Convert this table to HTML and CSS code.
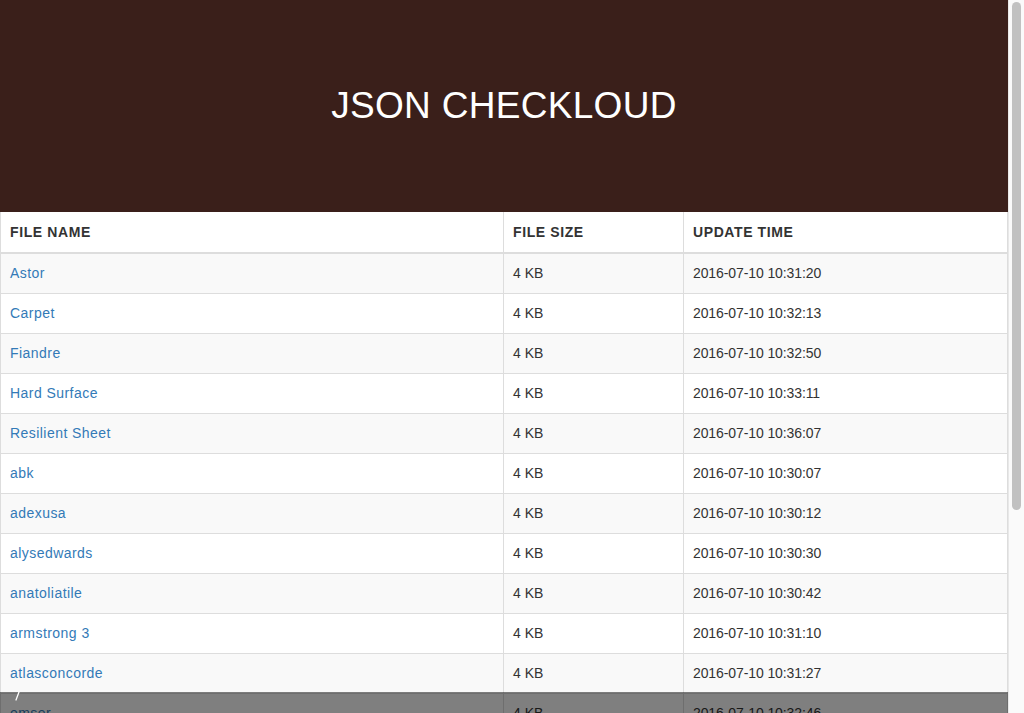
FILE: index.html
```html
<!DOCTYPE html>
<html lang="en">
<head>
<meta charset="utf-8">
<title>JSON CHECKLOUD</title>
<link rel="stylesheet" href="styles.css">
</head>
<body>
<div class="viewport">
  <div class="page">
    <header class="banner">
      <h1 class="banner-title">JSON CHECKLOUD</h1>
    </header>
    <main class="content">
      <table class="files">
        <colgroup>
          <col class="col-name">
          <col class="col-size">
          <col class="col-time">
        </colgroup>
        <thead>
          <tr><th>FILE NAME</th><th>FILE SIZE</th><th>UPDATE TIME</th></tr>
        </thead>
        <tbody>
          <tr><td><a href="#">Astor</a></td><td>4 KB</td><td class="time">2016-07-10 10:31:20</td></tr>
          <tr><td><a href="#">Carpet</a></td><td>4 KB</td><td class="time">2016-07-10 10:32:13</td></tr>
          <tr><td><a href="#">Fiandre</a></td><td>4 KB</td><td class="time">2016-07-10 10:32:50</td></tr>
          <tr><td><a href="#">Hard Surface</a></td><td>4 KB</td><td class="time">2016-07-10 10:33:11</td></tr>
          <tr><td><a href="#">Resilient Sheet</a></td><td>4 KB</td><td class="time">2016-07-10 10:36:07</td></tr>
          <tr><td><a href="#">abk</a></td><td>4 KB</td><td class="time">2016-07-10 10:30:07</td></tr>
          <tr><td><a href="#">adexusa</a></td><td>4 KB</td><td class="time">2016-07-10 10:30:12</td></tr>
          <tr><td><a href="#">alysedwards</a></td><td>4 KB</td><td class="time">2016-07-10 10:30:30</td></tr>
          <tr><td><a href="#">anatoliatile</a></td><td>4 KB</td><td class="time">2016-07-10 10:30:42</td></tr>
          <tr><td><a href="#">armstrong 3</a></td><td>4 KB</td><td class="time">2016-07-10 10:31:10</td></tr>
          <tr><td><a href="#">atlasconcorde</a></td><td>4 KB</td><td class="time">2016-07-10 10:31:27</td></tr>
          <tr class="partial"><td><a href="#">emser</a></td><td>4 KB</td><td class="time">2016-07-10 10:32:46</td></tr>
        </tbody>
      </table>
    </main>
    <div class="backdrop">
      <svg class="backdrop-mark" width="8" height="10" viewBox="0 0 8 10" aria-hidden="true">
        <line x1="2" y1="9" x2="5" y2="1" stroke="#fff" stroke-width="1.3" stroke-linecap="round"/>
      </svg>
    </div>
  </div>
  <div class="scrollbar" aria-hidden="true">
    <div class="scrollbar-thumb"></div>
  </div>
</div>
</body>
</html>
```

FILE: styles.css
```css
html,
body {
  height: 100%;
}

body {
  margin: 0;
  overflow: hidden;
  font-family: "Liberation Sans", Arial, Helvetica, sans-serif;
  font-size: 14px;
  line-height: 20px;
  color: #333;
  background: #fff;
}

.viewport {
  display: flex;
  height: 100vh;
}

.page {
  flex: 1;
  min-width: 0;
  position: relative;
  overflow: hidden;
}

.scrollbar {
  width: 16px;
  flex: none;
  box-sizing: border-box;
  background: #fafafa;
  border-left: 1px solid #e8e8e8;
  padding: 2px 3px 0 3px;
}

.scrollbar-thumb {
  height: 508px;
  background: #c1c1c1;
  border-radius: 5px;
}

.banner {
  height: 212px;
  background: #3a1f1a;
  display: flex;
  align-items: center;
  justify-content: center;
}

.banner-title {
  margin: 0;
  color: #fff;
  font-size: 37px;
  font-weight: normal;
  line-height: 40px;
  letter-spacing: 0.3px;
}

.files {
  width: 100%;
  border-collapse: collapse;
  table-layout: fixed;
  border-left: 1px solid #ddd;
  border-right: 1px solid #ddd;
}

.col-name {
  width: 503px;
}

.col-size {
  width: 180px;
}

.files th,
.files td {
  text-align: left;
  padding: 9px 9px 10px;
  line-height: 20px;
  border: 1px solid #ddd;
  white-space: nowrap;
}

.files thead th {
  font-weight: bold;
  letter-spacing: 0.6px;
  border-top: 0;
  border-bottom: 2px solid #ddd;
  padding-top: 10px;
  padding-bottom: 10px;
}

.files tbody tr:nth-child(odd) {
  background: #f9f9f9;
}

.files a {
  color: #337ab7;
  text-decoration: none;
  letter-spacing: 0.45px;
}

.files .time {
  letter-spacing: -0.1px;
}

.backdrop {
  position: absolute;
  left: 0;
  right: 0;
  bottom: 0;
  height: 21px;
  background: rgba(0, 0, 0, 0.5);
}

.backdrop-mark {
  position: absolute;
  left: 14px;
  top: -1px;
}
```
